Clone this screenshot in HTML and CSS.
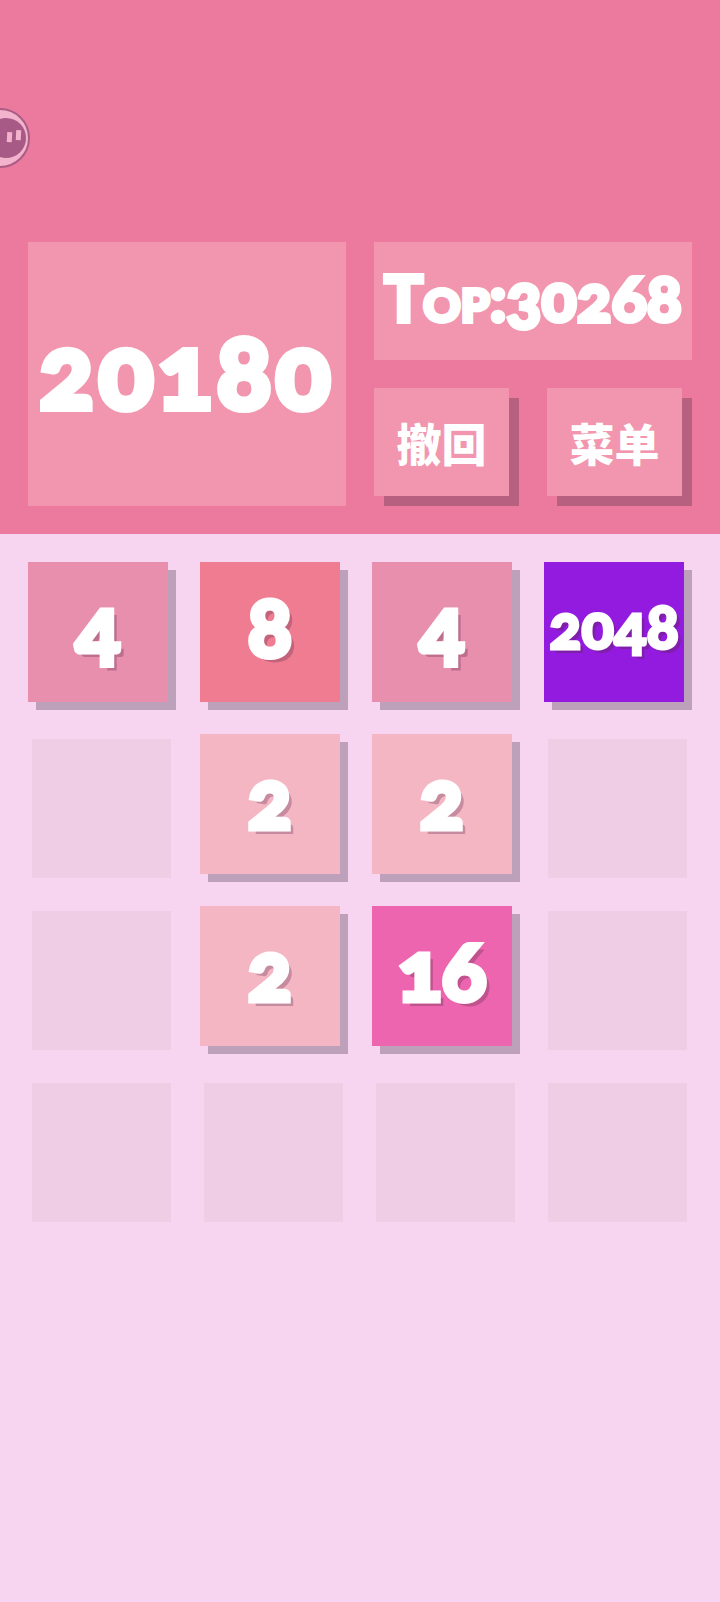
FILE: index.html
```html
<!DOCTYPE html>
<html>
    <head>
        <title>2048</title>
        <meta name="viewport" content="width=device-width, initial-scale=1">
        <link rel="stylesheet" href="styles.css">
    </head>

    <body>
        <!-- pause button, sticks out of the left edge -->
        <svg class="pause" width="32" height="64" viewBox="0 0 32 64">
            <circle cx="0" cy="32" r="29" fill="#f3b3cd" stroke="#ab5c85" stroke-width="2"/>
            <circle cx="6" cy="32" r="20" fill="#a65a85"/>
            <rect x="7" y="26" width="5" height="10" fill="#f3b3cd" transform="rotate(3 9 31)"/>
            <rect x="16" y="24" width="5" height="10" fill="#f3b3cd" transform="rotate(3 18 29)"/>
        </svg>

        <div class="top">
            <div class="score">20180</div>
            <div class="side">
                <div class="best">Top:30268</div>
                <div class="btns">
                    <button class="btn">撤回</button>
                    <button class="btn">菜单</button>
                </div>
            </div>
        </div>

        <div class="board">
            <div class="tile t4">4</div>
            <div class="tile t8">8</div>
            <div class="tile t4">4</div>
            <div class="tile t2048">2048</div>

            <div class="empty"></div>
            <div class="tile t2">2</div>
            <div class="tile t2">2</div>
            <div class="empty"></div>

            <div class="empty"></div>
            <div class="tile t2">2</div>
            <div class="tile t16">16</div>
            <div class="empty"></div>

            <div class="empty"></div>
            <div class="empty"></div>
            <div class="empty"></div>
            <div class="empty"></div>
        </div>
    </body>
</html>
```

FILE: styles.css
```css
* {
    box-sizing: border-box;
}
body {
    margin: 0;
    height: 1602px;
    overflow: hidden;
    background-color: #f7d5f0;
    font-family: "Lato", "Noto Sans CJK SC", sans-serif;
    font-weight: 900;
    color: #fff;
    font-feature-settings: "onum";
}
.pause {
    position: absolute;
    left: 0;
    top: 106px;
}
.top {
    display: flex;
    gap: 28px;
    height: 534px;
    padding: 242px 28px 0;
    background-color: #ec7a9e;
}
.score {
    width: 318px;
    height: 264px;
    padding-bottom: 10px;
    display: flex;
    align-items: center;
    justify-content: center;
    background-color: #f196ae;
    font-size: 102px;
    letter-spacing: 4px;
    -webkit-text-stroke: 6px #fff;
}
.side {
    width: 318px;
}
.best {
    height: 118px;
    margin-bottom: 28px;
    padding-bottom: 8px;
    display: flex;
    align-items: center;
    justify-content: center;
    background-color: #f196ae;
    font-size: 65px;
    font-variant-caps: small-caps;
    -webkit-text-stroke: 4px #fff;
    white-space: nowrap;
}
.btns {
    display: flex;
    gap: 38px;
}
.btn {
    width: 135px;
    height: 108px;
    padding: 0;
    border: none;
    background-color: #f196ae;
    box-shadow: 10px 10px 0 #b86080;
    color: #fff;
    font-family: "Noto Sans CJK SC", sans-serif;
    font-size: 45px;
    font-weight: 900;
}
.board {
    display: grid;
    grid-template-columns: repeat(4, 140px);
    grid-auto-rows: 140px;
    gap: 32px;
    padding: 28px 28px 0;
}
.tile {
    display: flex;
    align-items: center;
    justify-content: center;
    padding-bottom: 14px;
    box-shadow: 8px 8px 0 #bda0ba;
    font-size: 82px;
    text-shadow: 5px 5px 0 rgba(90, 40, 70, 0.3);
    -webkit-text-stroke: 5px #fff;
}
.t2 {
    background-color: #f5b6c4;
}
.t4 {
    background-color: #e88fae;
}
.t8 {
    background-color: #f07c92;
}
.t16 {
    background-color: #ec65ae;
}
.t2048 {
    padding-bottom: 12px;
    background-color: #931adf;
    font-size: 60px;
    -webkit-text-stroke: 3px #fff;
    text-shadow: 4px 4px 0 rgba(90, 40, 70, 0.35);
}
.empty {
    width: 139px;
    height: 139px;
    margin: 5px 0 0 4px;
    background-color: #efcde5;
}
```
